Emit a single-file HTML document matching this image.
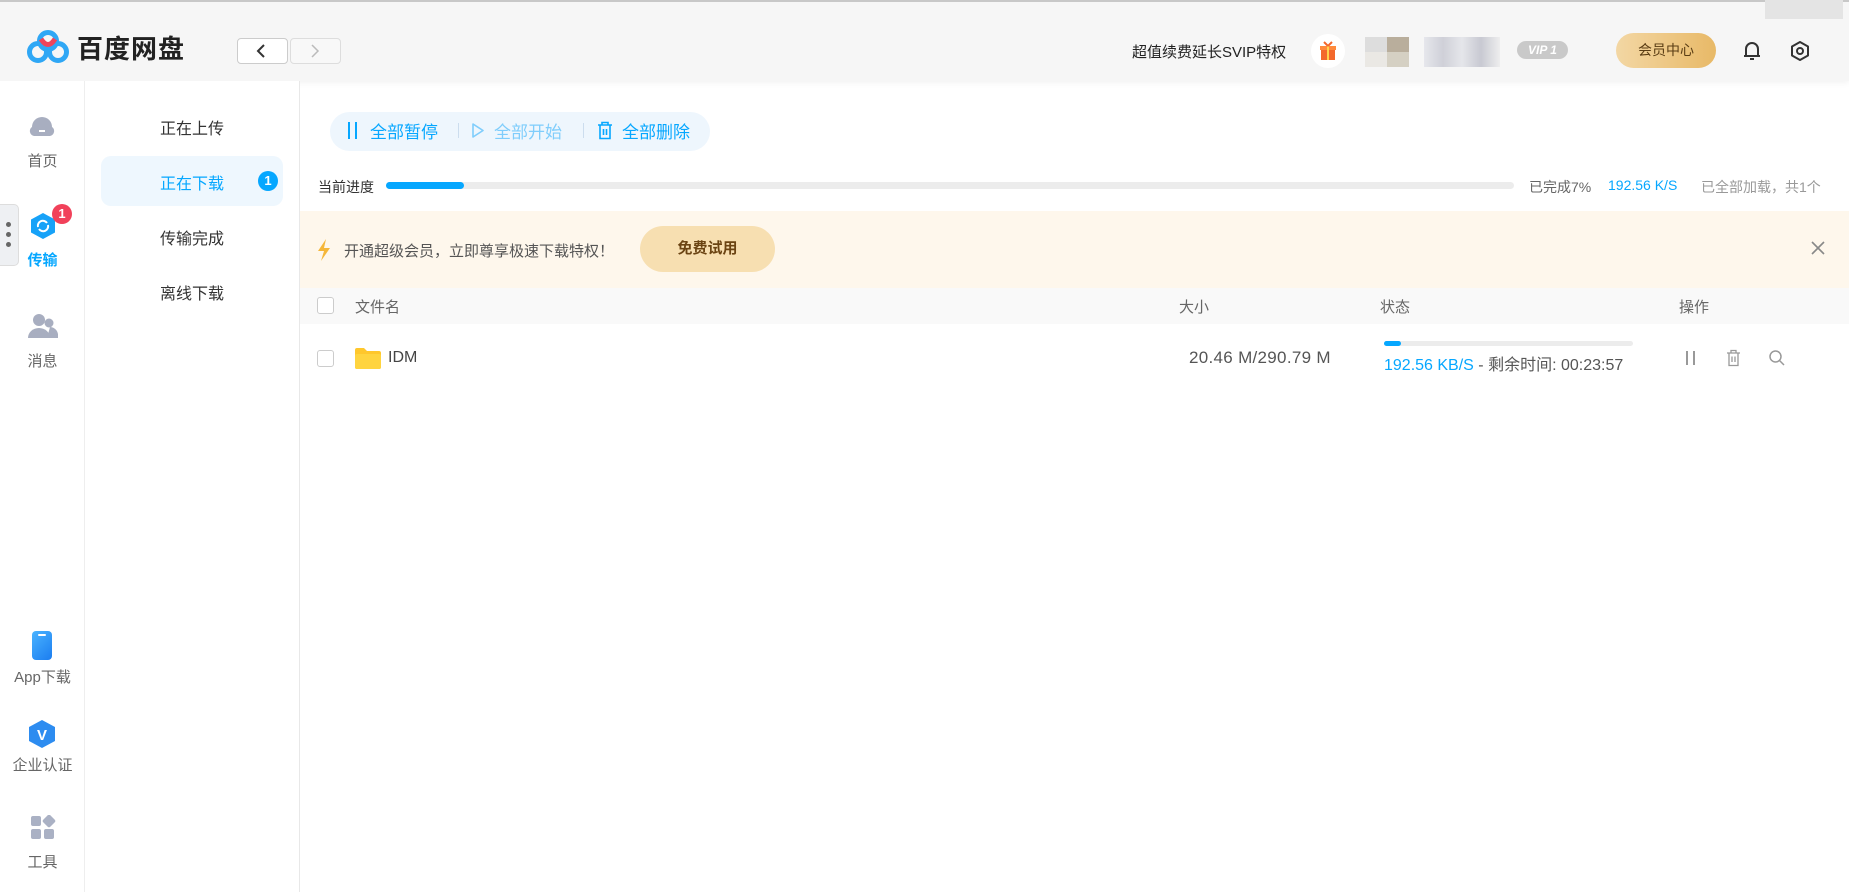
<!DOCTYPE html>
<html><head><meta charset="utf-8"><style>
*{margin:0;padding:0;box-sizing:border-box}
body{width:1849px;height:892px;overflow:hidden;background:#fff;font-family:"Liberation Sans","Noto Sans CJK SC",sans-serif;color:#333;position:relative}
.a{position:absolute}
.hdr{left:0;top:0;width:1849px;height:81px;background:#f6f6f6;border-top:2px solid #c8c8c8;box-shadow:0 2px 6px rgba(0,0,0,.05)}
.side{left:0;top:81px;width:85px;height:811px;background:#fff;border-right:1px solid #eee}
.sb2{left:85px;top:81px;width:215px;height:811px;background:#fff;border-right:1px solid #e8e8e8}
.lbl{width:85px;text-align:center;font-size:15px;color:#666}
.nav{left:160px;font-size:16px;color:#333}
.t{font-size:14px;color:#666;white-space:nowrap}
</style></head><body>
<div class="a hdr"></div>
<svg class="a" style="left:27px;top:30px" width="42" height="34" viewBox="0 0 42 34"><circle cx="11" cy="22" r="8.5" fill="none" stroke="#2fa7f5" stroke-width="5"/><circle cx="31" cy="22" r="8.5" fill="none" stroke="#2fa7f5" stroke-width="5"/><circle cx="21" cy="11" r="8.5" fill="none" stroke="#2fa7f5" stroke-width="5"/><path d="M14 9 Q21 20 28 9" stroke="#f0445a" stroke-width="5" fill="none"/></svg>
<div class="a" style="left:77px;top:29px;font-size:26px;font-weight:bold;color:#222;letter-spacing:1px">百度网盘</div>
<div class="a" style="left:237px;top:38px;width:51px;height:26px;border:1px solid #ccc;border-radius:4px;background:#fff"></div>
<svg class="a" style="left:255px;top:43px" width="14" height="16"><path d="M9 2 L3 8 L9 14" stroke="#333" stroke-width="2" fill="none"/></svg>
<div class="a" style="left:290px;top:38px;width:51px;height:26px;border:1px solid #ddd;border-radius:4px;background:#f8f8f8"></div>
<svg class="a" style="left:308px;top:43px" width="14" height="16"><path d="M4 2 L10 8 L4 14" stroke="#bbb" stroke-width="1.5" fill="none"/></svg>
<div class="a" style="left:1132px;top:41px;font-size:15px;color:#222">超值续费延长SVIP特权</div>
<div class="a" style="left:1311px;top:34px;width:34px;height:34px;border-radius:50%;background:#fff"></div>
<svg class="a" style="left:1319px;top:41px" width="18" height="20"><rect x="2" y="6" width="14" height="13" fill="#f3682c"/><rect x="1" y="5" width="16" height="4" fill="#ff8a3c"/><rect x="8" y="5" width="2" height="14" fill="#ffd24d"/><path d="M9 5 L5 1 M9 5 L13 1" stroke="#f3682c" stroke-width="2"/></svg>
<div class="a" style="left:1365px;top:37px;width:22px;height:15px;background:#ddd"></div><div class="a" style="left:1387px;top:37px;width:22px;height:15px;background:#b9ae9c"></div>
<div class="a" style="left:1365px;top:52px;width:22px;height:15px;background:#eae8e4"></div><div class="a" style="left:1387px;top:52px;width:22px;height:15px;background:#d5d0c3"></div>
<div class="a" style="left:1424px;top:37px;width:76px;height:30px;background:linear-gradient(90deg,#e6e7ec,#cfd0d8,#e5e6ea,#c8c9d2,#eee)"></div>
<div class="a" style="left:1517px;top:41px;width:51px;height:18px;border-radius:9px;background:#c9c9c9;color:#fff;font-size:12px;font-style:italic;font-weight:bold;text-align:center;line-height:18px">VIP 1</div>
<div class="a" style="left:1616px;top:33px;width:100px;height:35px;border-radius:18px;background:linear-gradient(90deg,#f3d7a4,#e8b967);color:#5a3d14;font-size:14px;text-align:center;line-height:35px">会员中心</div>
<svg class="a" style="left:1742px;top:40px" width="20" height="22"><path d="M4 16 V9 a6 6 0 0 1 12 0 V16 Z M2 16 H18" stroke="#333" stroke-width="2" fill="none" stroke-linejoin="round"/><path d="M8 19 H12" stroke="#333" stroke-width="2"/></svg>
<svg class="a" style="left:1789px;top:40px" width="22" height="22"><path d="M11 2 L19 6.5 V15.5 L11 20 L3 15.5 V6.5 Z" stroke="#333" stroke-width="2" fill="none" stroke-linejoin="round"/><circle cx="11" cy="11" r="3" stroke="#333" stroke-width="2" fill="none"/></svg>
<div class="a" style="left:1765px;top:0;width:78px;height:19px;background:#e4e4e4"></div>

<div class="a side"></div>
<svg class="a" style="left:28px;top:112px" width="28" height="26"><path d="M6 24 a5 5 0 0 1 -2 -9 a10 10 0 0 1 20 0 a5 5 0 0 1 -2 9 Z" fill="#a8aec0"/><rect x="11" y="18" width="6" height="2" fill="#fff"/></svg>
<div class="a lbl" style="left:0;top:150px">首页</div>
<div class="a" style="left:0;top:204px;width:19px;height:62px;border:1px solid #ddd;border-left:none;border-radius:0 5px 5px 0;background:#eef0f3"></div>
<div class="a" style="left:6px;top:222px;width:5px;height:5px;border-radius:50%;background:#666"></div>
<div class="a" style="left:6px;top:232px;width:5px;height:5px;border-radius:50%;background:#666"></div>
<div class="a" style="left:6px;top:242px;width:5px;height:5px;border-radius:50%;background:#666"></div>
<svg class="a" style="left:29px;top:212px" width="28" height="28"><path d="M14 1 L26 7.5 V20.5 L14 27 L2 20.5 V7.5 Z" fill="#17a2f8"/><path d="M9 15 a5 5 0 0 1 9 -4 M19 13 a5 5 0 0 1 -9 4" stroke="#fff" stroke-width="2" fill="none"/></svg>
<div class="a" style="left:52px;top:204px;width:20px;height:20px;border-radius:50%;background:#f1415a;color:#fff;font-size:13px;text-align:center;line-height:20px;font-weight:bold">1</div>
<div class="a lbl" style="left:0;top:249px;color:#06a7ff;font-weight:bold">传输</div>
<svg class="a" style="left:28px;top:313px" width="30" height="26"><circle cx="11" cy="7" r="6" fill="#a8aec0"/><path d="M0 25 a11 10 0 0 1 22 0 Z" fill="#a8aec0"/><circle cx="21" cy="10" r="4.5" fill="#a8aec0"/><path d="M19 25 H30 a8 9 0 0 0 -8 -11 Z" fill="#a8aec0"/></svg>
<div class="a lbl" style="left:0;top:350px">消息</div>
<div class="a" style="left:32px;top:631px;width:20px;height:29px;border-radius:4px;background:linear-gradient(135deg,#4ab3ff,#1b7df0)"></div>
<div class="a" style="left:38px;top:634px;width:8px;height:2px;background:#fff;border-radius:1px"></div>
<div class="a lbl" style="left:0;top:666px">App下载</div>
<svg class="a" style="left:28px;top:719px" width="28" height="30"><path d="M14 1 L27 8 V22 L14 29 L1 22 V8 Z" fill="#2d8cf0"/><text x="14" y="21" font-size="15" font-weight="bold" fill="#fff" text-anchor="middle" font-family="Liberation Sans">V</text></svg>
<div class="a lbl" style="left:0;top:754px">企业认证</div>
<svg class="a" style="left:30px;top:815px" width="26" height="26"><rect x="1" y="1" width="10" height="10" rx="2" fill="#aab1c4"/><rect x="14" y="1" width="10" height="10" rx="2" fill="#aab1c4" transform="rotate(45 19 6)"/><rect x="1" y="14" width="10" height="10" rx="2" fill="#aab1c4"/><rect x="14" y="14" width="10" height="10" rx="2" fill="#aab1c4"/></svg>
<div class="a lbl" style="left:0;top:851px">工具</div>

<div class="a sb2"></div>
<div class="a nav" style="top:115px">正在上传</div>
<div class="a" style="left:101px;top:156px;width:182px;height:50px;border-radius:10px;background:#eef7fe"></div>
<div class="a nav" style="top:170px;color:#06a7ff">正在下载</div>
<div class="a" style="left:258px;top:171px;width:20px;height:20px;border-radius:50%;background:#06a7ff;color:#fff;font-size:13px;font-weight:bold;text-align:center;line-height:20px">1</div>
<div class="a nav" style="top:225px">传输完成</div>
<div class="a nav" style="top:280px">离线下载</div>

<div class="a" style="left:330px;top:112px;width:380px;height:39px;border-radius:20px;background:#eef6fd"></div>
<div class="a" style="left:348px;top:122px;width:2px;height:17px;background:#06a7ff"></div><div class="a" style="left:355px;top:122px;width:2px;height:17px;background:#06a7ff"></div>
<div class="a" style="left:370px;top:118px;font-size:17px;color:#06a7ff">全部暂停</div>
<div class="a" style="left:458px;top:123px;width:1px;height:15px;background:#cde"></div>
<svg class="a" style="left:471px;top:122px" width="14" height="17"><path d="M2 2 L12 8.5 L2 15 Z" stroke="#7fcdfc" stroke-width="1.6" fill="none" stroke-linejoin="round"/></svg>
<div class="a" style="left:494px;top:118px;font-size:17px;color:#7fcdfc">全部开始</div>
<div class="a" style="left:583px;top:123px;width:1px;height:15px;background:#cde"></div>
<svg class="a" style="left:597px;top:121px" width="16" height="19"><path d="M1 4 H15 M5 4 V1.5 H11 V4 M3 4 V17.5 H13 V4 M6.5 8 V14 M9.5 8 V14" stroke="#06a7ff" stroke-width="1.6" fill="none"/></svg>
<div class="a" style="left:622px;top:118px;font-size:17px;color:#06a7ff">全部删除</div>

<div class="a t" style="left:318px;top:177px;color:#333">当前进度</div>
<div class="a" style="left:386px;top:182px;width:1128px;height:7px;border-radius:4px;background:#ececec"></div>
<div class="a" style="left:386px;top:182px;width:78px;height:7px;border-radius:4px;background:#06a7ff"></div>
<div class="a t" style="left:1529px;top:177px">已完成7%</div>
<div class="a t" style="left:1608px;top:177px;color:#06a7ff">192.56 K/S</div>
<div class="a t" style="left:1701px;top:177px;color:#999">已全部加载，共1个</div>

<div class="a" style="left:300px;top:211px;width:1549px;height:77px;background:#fef7ec"></div>
<svg class="a" style="left:317px;top:239px" width="14" height="22"><path d="M9 0 L1 12 H7 L4 22 L13 9 H7 Z" fill="#f5b73a"/></svg>
<div class="a" style="left:344px;top:240px;font-size:15px;color:#555">开通超级会员，立即尊享极速下载特权！</div>
<div class="a" style="left:640px;top:226px;width:135px;height:46px;border-radius:23px;background:#f7dfb1;color:#6b4413;font-size:15px;font-weight:bold;text-align:center;line-height:46px">免费试用</div>
<svg class="a" style="left:1811px;top:241px" width="14" height="14"><path d="M1 1 L13 13 M13 1 L1 13" stroke="#888" stroke-width="1.6"/></svg>

<div class="a" style="left:300px;top:288px;width:1549px;height:36px;background:#f9f9f9"></div>
<div class="a" style="left:317px;top:297px;width:17px;height:17px;border:1px solid #ccc;border-radius:3px;background:#fff"></div>
<div class="a t" style="left:355px;top:296px;font-size:15px">文件名</div>
<div class="a t" style="left:1179px;top:296px;font-size:15px">大小</div>
<div class="a t" style="left:1380px;top:296px;font-size:15px">状态</div>
<div class="a t" style="left:1679px;top:296px;font-size:15px">操作</div>

<div class="a" style="left:317px;top:350px;width:17px;height:17px;border:1px solid #ccc;border-radius:3px;background:#fff"></div>
<svg class="a" style="left:355px;top:347px" width="26" height="22"><path d="M0 3 a2 2 0 0 1 2 -2 H9 L12 4 H24 a2 2 0 0 1 2 2 V20 a2 2 0 0 1 -2 2 H2 a2 2 0 0 1 -2 -2 Z" fill="#ffc72c"/><rect x="0" y="7" width="26" height="15" rx="2" fill="#ffd43f"/></svg>
<div class="a" style="left:388px;top:349px;font-size:16px;color:#444">IDM</div>
<div class="a" style="left:1189px;top:348px;font-size:17px;color:#555;letter-spacing:0.3px;white-space:nowrap">20.46 M/290.79 M</div>
<div class="a" style="left:1384px;top:341px;width:249px;height:5px;border-radius:3px;background:#ececec"></div>
<div class="a" style="left:1384px;top:341px;width:17px;height:5px;border-radius:3px;background:#06a7ff"></div>
<div class="a" style="left:1384px;top:351px;font-size:16px;color:#555;white-space:nowrap"><span style="color:#06a7ff">192.56 KB/S</span> - 剩余时间: 00:23:57</div>
<div class="a" style="left:1686px;top:351px;width:1.5px;height:14px;background:#999"></div><div class="a" style="left:1693px;top:351px;width:1.5px;height:14px;background:#999"></div>
<svg class="a" style="left:1726px;top:349px" width="15" height="18"><path d="M1 4 H14 M5 4 V1.5 H10 V4 M3 4 V16.5 H12 V4 M6 7.5 V13 M9 7.5 V13" stroke="#999" stroke-width="1.3" fill="none"/></svg>
<svg class="a" style="left:1768px;top:349px" width="18" height="18"><circle cx="7.5" cy="7.5" r="5.5" stroke="#999" stroke-width="1.5" fill="none"/><path d="M11.5 11.5 L16 16" stroke="#999" stroke-width="1.5"/></svg>
</body></html>
